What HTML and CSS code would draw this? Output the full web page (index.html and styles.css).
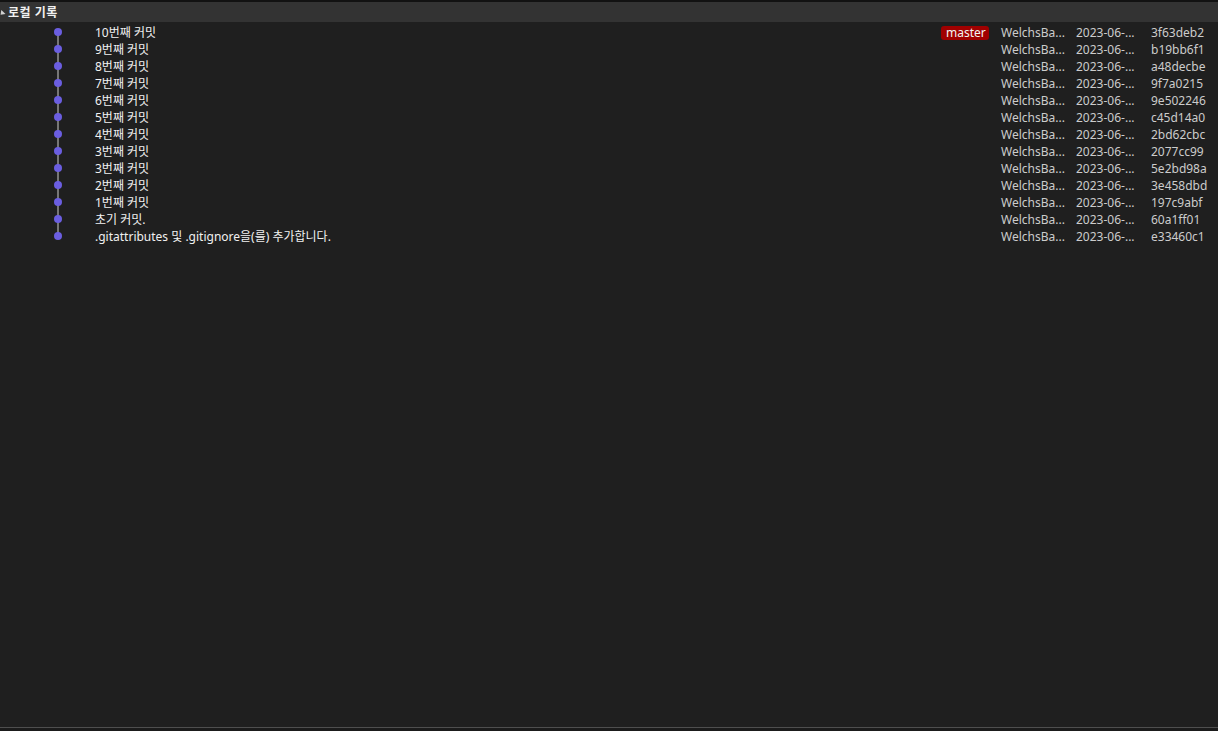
FILE: index.html
```html
<!DOCTYPE html>
<html lang="ko">
<head>
<meta charset="utf-8">
<link rel="stylesheet" href="styles.css">
</head>
<body>
<div class="app">
  <div class="topstrip"></div>
  <div class="header"><span class="caret"></span><span class="title">로컬 기록</span></div>
  <div class="list">
    <div class="row first"><div class="graph"></div><div class="msg">10번째 커밋</div><div class="refs"><span class="badge">master</span></div><div class="author">WelchsBa...</div><div class="date">2023-06-...</div><div class="hash">3f63deb2</div></div>
    <div class="row"><div class="graph"></div><div class="msg">9번째 커밋</div><div class="refs"></div><div class="author">WelchsBa...</div><div class="date">2023-06-...</div><div class="hash">b19bb6f1</div></div>
    <div class="row"><div class="graph"></div><div class="msg">8번째 커밋</div><div class="refs"></div><div class="author">WelchsBa...</div><div class="date">2023-06-...</div><div class="hash">a48decbe</div></div>
    <div class="row"><div class="graph"></div><div class="msg">7번째 커밋</div><div class="refs"></div><div class="author">WelchsBa...</div><div class="date">2023-06-...</div><div class="hash">9f7a0215</div></div>
    <div class="row"><div class="graph"></div><div class="msg">6번째 커밋</div><div class="refs"></div><div class="author">WelchsBa...</div><div class="date">2023-06-...</div><div class="hash">9e502246</div></div>
    <div class="row"><div class="graph"></div><div class="msg">5번째 커밋</div><div class="refs"></div><div class="author">WelchsBa...</div><div class="date">2023-06-...</div><div class="hash">c45d14a0</div></div>
    <div class="row"><div class="graph"></div><div class="msg">4번째 커밋</div><div class="refs"></div><div class="author">WelchsBa...</div><div class="date">2023-06-...</div><div class="hash">2bd62cbc</div></div>
    <div class="row"><div class="graph"></div><div class="msg">3번째 커밋</div><div class="refs"></div><div class="author">WelchsBa...</div><div class="date">2023-06-...</div><div class="hash">2077cc99</div></div>
    <div class="row"><div class="graph"></div><div class="msg">3번째 커밋</div><div class="refs"></div><div class="author">WelchsBa...</div><div class="date">2023-06-...</div><div class="hash">5e2bd98a</div></div>
    <div class="row"><div class="graph"></div><div class="msg">2번째 커밋</div><div class="refs"></div><div class="author">WelchsBa...</div><div class="date">2023-06-...</div><div class="hash">3e458dbd</div></div>
    <div class="row"><div class="graph"></div><div class="msg">1번째 커밋</div><div class="refs"></div><div class="author">WelchsBa...</div><div class="date">2023-06-...</div><div class="hash">197c9abf</div></div>
    <div class="row"><div class="graph"></div><div class="msg">초기 커밋.</div><div class="refs"></div><div class="author">WelchsBa...</div><div class="date">2023-06-...</div><div class="hash">60a1ff01</div></div>
    <div class="row last"><div class="graph"></div><div class="msg">.gitattributes 및 .gitignore을(를) 추가합니다.</div><div class="refs"></div><div class="author">WelchsBa...</div><div class="date">2023-06-...</div><div class="hash">e33460c1</div></div>
  </div>
  <div class="bottom"></div>
</div>
</body>
</html>
```

FILE: styles.css
```css
html, body {
  margin: 0;
  padding: 0;
  background: #1f1f1f;
}
body {
  font-family: "Noto Sans", "Noto Sans CJK KR", sans-serif;
  font-size: 12px;
  color: #f1f1f1;
}
.app {
  display: flex;
  flex-direction: column;
  height: 731px;
  width: 1218px;
  overflow: hidden;
}
.topstrip {
  height: 2px;
  background: #121212;
}
.header {
  height: 20px;
  background: #333333;
  display: flex;
  align-items: center;
  gap: 4px;
}
.caret {
  width: 0;
  height: 0;
  border-top: 3px solid transparent;
  border-bottom: 3px solid transparent;
  border-right: 4px solid #d0d0d0;
  transform: rotate(-45deg) translate(-1px, 1px);
}
.title {
  font-weight: bold;
  font-size: 12px;
  color: #f1f1f1;
  letter-spacing: 0.5px;
}
.list {
  flex: 1;
  padding-top: 2px;
  display: flex;
  flex-direction: column;
}
.row {
  height: 17px;
  display: flex;
  align-items: center;
  line-height: 17px;
}
.graph {
  width: 95px;
  height: 17px;
  position: relative;
  flex: none;
}
.graph::before {
  content: "";
  position: absolute;
  left: 57px;
  width: 2px;
  top: 0;
  bottom: 0;
  background: #767676;
}
.row.first .graph::before { top: 8px; }
.row.last .graph::before { bottom: 9px; }
.graph::after {
  content: "";
  position: absolute;
  left: 54px;
  top: 4px;
  width: 8px;
  height: 8px;
  border-radius: 50%;
  background: #6b5ee0;
}
.msg {
  flex: 1;
  white-space: nowrap;
  color: #f1f1f1;
}
.refs {
  width: 60px;
  display: flex;
  justify-content: flex-start;
  flex: none;
}
.badge {
  background: #a00000;
  color: #f4f4f4;
  border-radius: 3px;
  height: 14px;
  line-height: 14px;
  padding: 0 5px;
  width: 38px;
  text-align: center;
  font-size: 12px;
}
.author, .date, .hash {
  flex: none;
  color: #cccccc;
  white-space: nowrap;
}
.author { width: 75px; }
.date { width: 75px; }
.hash { width: 67px; }
.bottom {
  height: 3px;
  border-top: 1px solid #4e4e4e;
  background: #1b1b1b;
}
```
